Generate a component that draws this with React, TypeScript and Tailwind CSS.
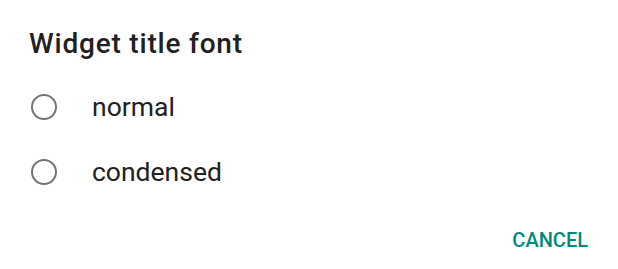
import { useState } from "react";

const options = ["normal", "condensed"];

export default function App() {
  const [selected, setSelected] = useState<string | null>(null);

  return (
    <div className="w-[618px] h-[269px] bg-white font-['Roboto',sans-serif] flex flex-col">
      <h2 className="pl-[29px] pt-[26px] text-[28px] leading-[36px] font-medium tracking-[0.8px] text-[#212121]">
        Widget title font
      </h2>

      <div className="mt-[12px] flex flex-col">
        {options.map((opt) => (
          <button
            key={opt}
            onClick={() => setSelected(opt)}
            className="flex items-center h-[65px] pl-[31px] text-left"
          >
            <span className="w-[26px] h-[26px] rounded-full border-[2.5px] border-[#757575] flex items-center justify-center shrink-0">
              {selected === opt && <span className="w-[12px] h-[12px] rounded-full bg-[#00897b]" />}
            </span>
            <span className="ml-[35px] text-[26.5px] text-[#212121]">{opt}</span>
          </button>
        ))}
      </div>

      <div className="flex justify-end pr-[30px] mt-auto pb-[14px]">
        <button className="text-[20px] font-medium text-[#00897b] uppercase">
          Cancel
        </button>
      </div>
    </div>
  );
}
